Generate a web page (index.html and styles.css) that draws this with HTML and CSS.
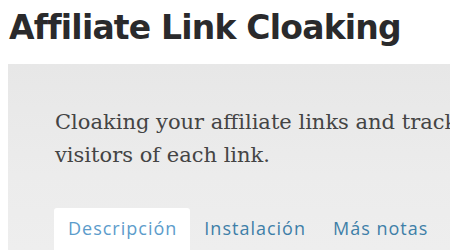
FILE: index.html
```html
<!DOCTYPE html>
<html lang="en">
<head>
<meta charset="utf-8">
<link rel="stylesheet" href="styles.css">
</head>
<body>
<h1 class="title">Affiliate Link Cloaking</h1>
<section class="banner">
  <p class="desc">Cloaking your affiliate links and track the number of visitors of each link.</p>
  <nav class="tabs">
    <span class="tab tab-active">Descripción</span>
    <span class="tab">Instalación</span>
    <span class="tab">Más notas</span>
  </nav>
</section>
</body>
</html>
```
FILE: styles.css
```css
html, body {
  margin: 0;
  padding: 0;
  background: #fff;
  overflow: hidden;
}
body {
  padding: 8px 0 0 8px;
  width: 450px;
  height: 250px;
  box-sizing: border-box;
}
.title {
  margin: 0 0 16px 1px;
  font-family: "DejaVu Sans", Verdana, sans-serif;
  font-weight: bold;
  font-size: 33px;
  line-height: 40px;
  letter-spacing: -0.8px;
  color: #2a2a2c;
  white-space: nowrap;
}
.banner {
  background: linear-gradient(180deg, #e7e7e7 0%, #ececec 60%, #eeeeee 100%);
  padding: 42px 0 0 47px;
  height: 186px;
  box-sizing: border-box;
  width: 442px;
  overflow: hidden;
}
.desc {
  margin: 0;
  width: 620px;
  font-family: "DejaVu Serif", Georgia, serif;
  font-size: 21px;
  line-height: 33px;
  color: #444;
}
.tabs {
  display: flex;
  margin-top: 36px;
  margin-left: -1px;
}
.tab {
  padding: 8px 13px 10px 14px;
  font-family: "Open Sans", sans-serif;
  font-size: 18px;
  line-height: 24px;
  letter-spacing: 1px;
  color: #3e7fa8;
  white-space: nowrap;
}
.tab-active {
  background: #fff;
  border-radius: 3px 3px 0 0;
  color: #5c9ccb;
}
```
